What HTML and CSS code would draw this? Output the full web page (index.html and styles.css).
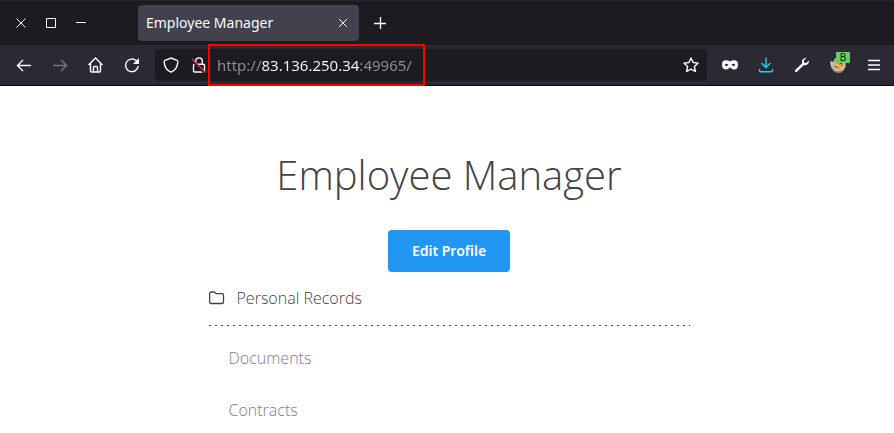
FILE: index.html
```html
<!DOCTYPE html>
<html lang="en">
<head>
<meta charset="utf-8">
<title>Employee Manager</title>
<link rel="stylesheet" href="styles.css">
</head>
<body>
<header class="browser">
  <div class="titlebar">
    <div class="window-controls">
      <button class="icon-button" aria-label="Close window"><svg width="12" height="12" viewBox="0 0 12 12"><path d="M1.5 1.5l9 9M10.5 1.5l-9 9"/></svg></button>
      <button class="icon-button" aria-label="Maximize"><svg width="10" height="10" viewBox="0 0 10 10"><path d="M.5.5h9v9h-9z"/></svg></button>
      <button class="icon-button" aria-label="Minimize"><svg width="10" height="10" viewBox="0 0 10 10"><path d="M0 4.5h10"/></svg></button>
    </div>
    <div class="tab">
      <span class="tab-title">Employee Manager</span>
      <button class="tab-close" aria-label="Close tab"><svg width="10" height="10" viewBox="0 0 10 10"><path d="M1 1l8 8M9 1l-8 8"/></svg></button>
    </div>
    <button class="icon-button new-tab" aria-label="New tab"><svg width="12" height="12" viewBox="0 0 12 12"><path stroke-width="1.3" d="M6.5 0v12M0 6.5h12"/></svg></button>
  </div>
  <nav class="toolbar" aria-label="Navigation">
    <div class="tools">
      <button class="icon-button" aria-label="Back"><svg width="16" height="16" viewBox="0 0 16 16"><path stroke-width="1.4" d="M15 8.5H1.5M7 3L1.5 8.5 7 14"/></svg></button>
      <button class="icon-button dim" aria-label="Forward"><svg width="16" height="16" viewBox="0 0 16 16"><path stroke-width="1.4" d="M1 8.5h13.5M9 3L14.5 8.5 9 14"/></svg></button>
      <button class="icon-button" aria-label="Home"><svg width="16" height="16" viewBox="0 0 16 16"><path stroke-width="1.4" d="M.5 8l7-7 7 7M2.5 6.5V14q0 1 1 1h8q1 0 1-1V6.5M5.5 15v-4.5q0-1 1-1h2q1 0 1 1V15"/></svg></button>
      <button class="icon-button" aria-label="Reload"><svg width="16" height="16" viewBox="0 0 16 16"><path stroke-width="1.4" d="M14.2 9A6.3 6.3 0 1 1 12 3.5L14 5.5"/><path class="solid" d="M15 1v6H9z"/></svg></button>
    </div>
    <div class="address-bar">
      <button class="address-icon" aria-label="Tracking protection"><svg width="16" height="16" viewBox="0 0 16 16"><path stroke-width="1.4" d="M8 1L14 3.3Q15 3.7 14.8 5 14.4 12.5 8 15.2 1.6 12.5 1.2 5 1 3.7 2 3.3z"/></svg></button>
      <button class="address-icon" aria-label="Connection not secure"><svg width="16" height="16" viewBox="0 0 16 16"><path stroke-width="1.4" d="M4.7 7V4.2a3.3 3.3 0 0 1 6.6 0V7M3.5 7.2h9q1 0 1 1V14q0 1-1 1h-9q-1 0-1-1V8.2q0-1 1-1z"/><path class="knockout" d="M1 3.5l13 13"/><path class="strike" d="M1 2l13.5 13.5"/></svg></button>
      <div class="address-field"><input class="address" type="text" aria-label="Address" value="http://83.136.250.34:49965/"></div>
      <button class="address-icon star" aria-label="Bookmark"><svg width="16" height="16" viewBox="0 0 16 16"><path stroke-width="1.4" stroke-linejoin="round" d="M8 1l2.1 4.5 5 .6-3.7 3.4 1 5L8 12.1l-4.4 2.4 1-5L.9 6.1l5-.6z"/></svg></button>
    </div>
    <div class="tools">
      <button class="icon-button" aria-label="Private mask"><svg width="16" height="16" viewBox="0 0 16 16"><path class="solid" fill-rule="evenodd" d="M4 3.2Q6.500 3.2 8 4.500 9.500 3.2 12 3.2 16 3.2 16 7.2 16 12.500 12 12.500 10 12.500 8 10.2 6 12.500 4 12.500 0 12.500 0 7.2 0 3.2 4 3.2zM2.600 8.200Q4.600 10 6.500 7.700 4 5.700 2.600 8.200zM9.500 7.700q1.900 2.300 3.900.5-1.400-2.500-3.900-.5z"/></svg></button>
      <button class="icon-button download" aria-label="Downloads"><svg width="16" height="16" viewBox="0 0 16 16"><path stroke-width="1.4" d="M8 .5v10M3.500 6L8 10.500 12.500 6M1.500 12v1.500q0 1.300 1.300 1.300h10.400q1.300 0 1.300-1.300V12"/></svg></button>
      <button class="icon-button" aria-label="Tools"><svg width="16" height="16" viewBox="0 0 16 16"><path class="solid" d="M12.500.8q-2.300-.2-3.700 1.500Q7.500 4 8.200 6.300L1.200 13q-.8 1 0 1.800t1.800 0l6.900-6.900q2.400.8 4-.8 1.300-1.300 1-3.500l-2.600 2.300-2.200-.2-.2-2.200z"/></svg></button>
      <button class="icon-button extension" aria-label="Proxy extension"><svg width="16" height="16" viewBox="0 0 16 16"><path fill="#c9c8c4" stroke="none" d="M0 4l3 1 2-3.500L8 0l5 1.500L15.500 5v5L12 15l-4 1-4.500-2L1 10z"/><path fill="#8b7768" stroke="none" d="M1 8l3 5 4 1.500 4-1 3-4-1 4-3.500 2.500H7l-4-2z"/><path fill="#ee8b2d" stroke="none" d="M3 5l3-2.500 5 .5 3 3-1 5-3 1.500-4-.5-3-3z"/><path fill="#f6b56b" stroke="none" d="M2 9l3 2.500 4 .5 3-1-2 2.500-4-.5z"/><path fill="#c9c8c4" stroke="none" d="M3 5l4 2 6 4 1-4 1 3-2 3-4-3-5-2z"/><path fill="#6d4930" stroke="none" d="M5 9h2v1H5zM10 6h2v1h-2z"/></svg><span class="badge">B</span></button>
      <button class="icon-button" aria-label="Menu"><svg width="12" height="12" viewBox="0 0 12 12"><path stroke-width="1.3" d="M0 1.500h12M0 6h12M0 10.500h12"/></svg></button>
    </div>
  </nav>
</header>
<main class="page">
  <h1 class="heading">Employee Manager</h1>
  <button class="edit-button">Edit Profile</button>
  <section class="records">
    <h2 class="records-title"><svg width="16" height="14" viewBox="0 0 16 14"><path stroke-width="1.3" d="M2 1h3q.7 0 1.200.6l.8 1h6q1.500 0 1.500 1.500v6.800q0 1.600-1.500 1.600H2Q.7 12.500.7 10.900V2.600Q.7 1 2 1z"/></svg>Personal Records</h2>
    <ul class="record-list">
      <li><a href="#documents">Documents</a></li>
      <li><a href="#contracts">Contracts</a></li>
    </ul>
  </section>
</main>
</body>
</html>
```
FILE: styles.css
```css
*,
*::after {
  box-sizing: border-box;
}

body {
  margin: 0;
  background: #fff;
  font-family: "Open Sans", sans-serif;
}

button {
  padding: 0;
  border: 0;
  background: none;
  color: inherit;
  font-family: inherit;
}

svg {
  display: block;
  flex: none;
  fill: none;
  stroke: currentColor;
}

.solid {
  fill: currentColor;
  stroke: none;
}

.browser {
  background: #2b2a33;
  color: #fbfbfe;
  border-bottom: 1px solid #08080a;
}

.titlebar {
  display: flex;
  align-items: center;
  height: 45px;
  padding-left: 6px;
  background: #1c1b22;
  border-top: 1px solid #242526;
}

.window-controls {
  display: flex;
  margin-right: 42px;
}

.window-controls .icon-button {
  width: 30px;
}

.icon-button,
.address-icon {
  display: flex;
  align-items: center;
  justify-content: center;
  flex: none;
  width: 36px;
  height: 32px;
}

.tab {
  display: flex;
  align-items: center;
  justify-content: space-between;
  width: 221px;
  height: 36px;
  padding: 0 11px 0 8px;
  border-radius: 4px;
  background: #42414d;
}

.tab-title {
  font: 14px/20px "Noto Sans", sans-serif;
}

.new-tab {
  margin-left: 3px;
}

.toolbar {
  display: flex;
  align-items: center;
  height: 40px;
  padding: 0 2px 0 6px;
}

.tools {
  display: flex;
}

.dim {
  color: #77767d;
}

.address-bar {
  display: flex;
  align-items: center;
  flex: 1;
  height: 32px;
  margin: 0 5px;
  padding-left: 2px;
  border-radius: 4px;
  background: #1c1b22;
}

.address-icon {
  width: 28px;
}

.star {
  width: 32px;
}

.knockout {
  stroke: #1c1b22;
  stroke-width: 2;
}

.strike {
  stroke: #e22850;
  stroke-width: 1.5;
}

.address-field {
  position: relative;
  display: flex;
  flex: 1;
  padding-left: 4px;
}

.address-field::after {
  content: "";
  position: absolute;
  top: -9px;
  left: -5px;
  width: 217px;
  height: 42px;
  border: 2px solid #f00;
  pointer-events: none;
}

.address {
  flex: 1;
  min-width: 0;
  height: 24px;
  padding: 0;
  border: 0;
  outline: 0;
  background: linear-gradient(90deg, #8f8f96 45px, #fbfbfe 45px 143px, #8f8f96 143px);
  -webkit-background-clip: text;
  background-clip: text;
  color: transparent;
  font: 15px/24px "Noto Sans", sans-serif;
}

.download {
  color: #00ddff;
}

.extension {
  position: relative;
}

.badge {
  position: absolute;
  top: 3px;
  left: 16px;
  width: 14px;
  height: 11px;
  border-radius: 1px;
  background: #66cc66;
  color: #102010;
  font: 10px/11px "Noto Sans", sans-serif;
  text-align: center;
}

.page {
  display: flex;
  flex-direction: column;
  align-items: center;
  padding: 59px 200px 0 204px;
}

.heading {
  margin: 0;
  color: #424247;
  font-size: 40px;
  font-weight: 300;
  line-height: 60px;
}

.edit-button {
  height: 42px;
  margin-top: 25px;
  padding: 0 24px;
  border-radius: 4px;
  background: #2196f3;
  color: #fff;
  font: 600 14px/20px "Noto Sans", sans-serif;
}

.records {
  width: 100%;
  max-width: 481px;
}

.records-title {
  display: flex;
  align-items: center;
  gap: 12px;
  height: 54px;
  margin: 0;
  padding-bottom: 2px;
  color: #42424e;
  background: repeating-linear-gradient(90deg, #424247 0 2px, transparent 2px 6px) left bottom / 100% 1px no-repeat;
  font-size: 16px;
  font-weight: 300;
  line-height: 24px;
}

.record-list {
  margin: 0;
  padding: 6px 0 0 20px;
  list-style: none;
}

.record-list a {
  display: block;
  color: #7c7c86;
  font-size: 16px;
  font-weight: 300;
  line-height: 52px;
  text-decoration: none;
}
```
